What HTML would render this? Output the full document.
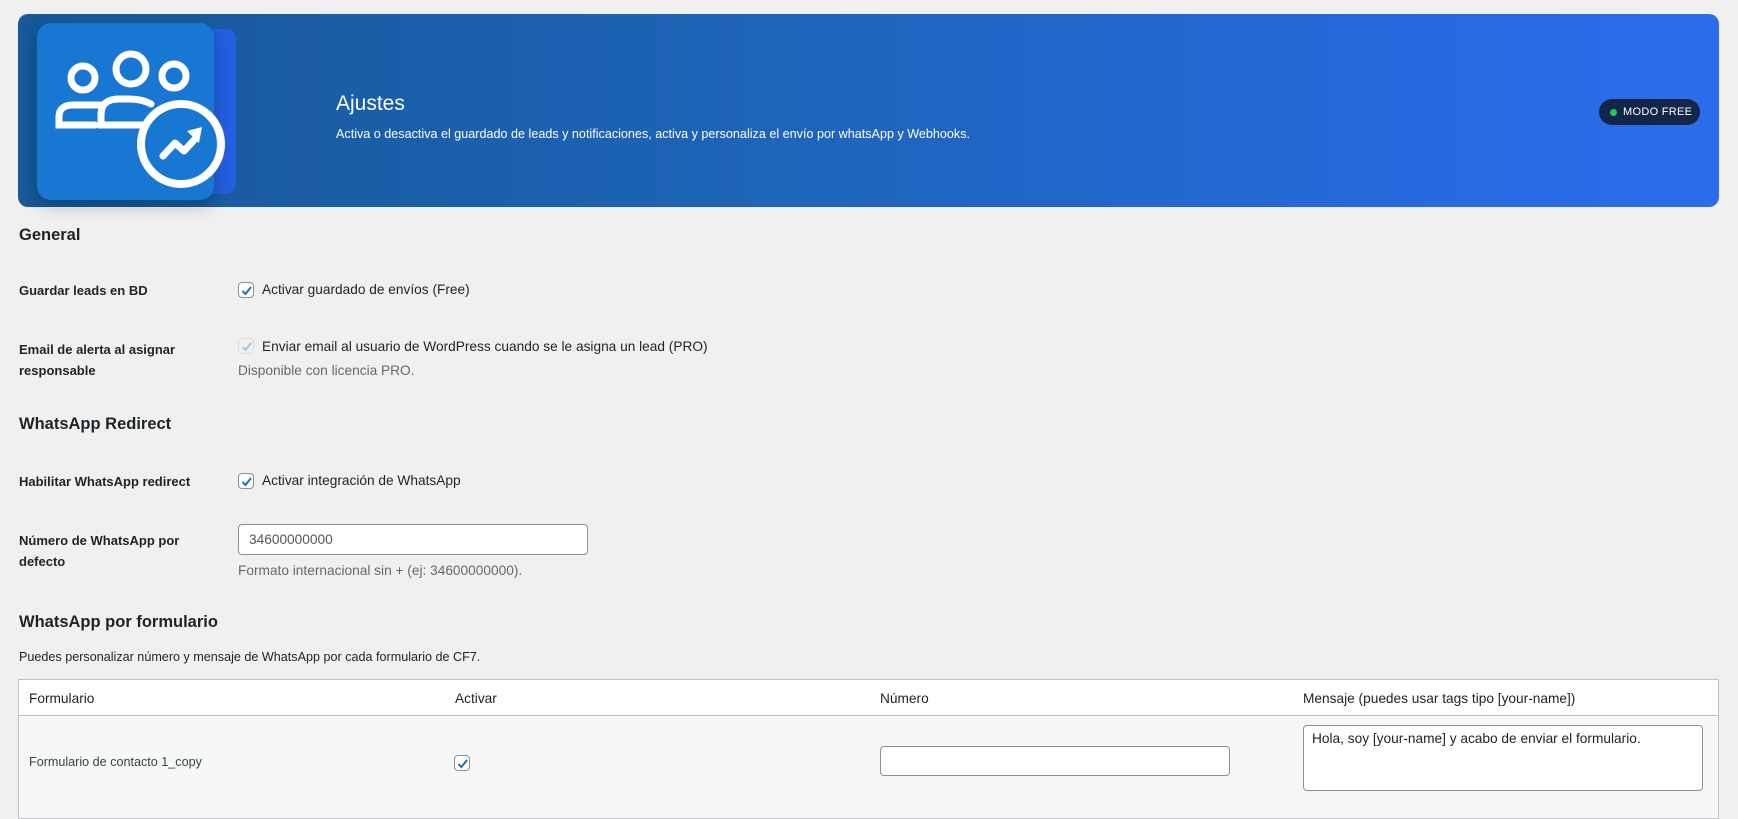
<!DOCTYPE html>
<html><head><meta charset="utf-8"><style>
*{box-sizing:border-box}
body{margin:0;width:1738px;height:807px;overflow:hidden;background:#f0f0f1;font-family:"Liberation Sans",sans-serif;color:#1d2327;font-size:13.7px;position:relative}
.a{position:absolute;white-space:nowrap}
.banner{position:absolute;left:18px;top:14px;width:1701px;height:193px;border-radius:10px;background:linear-gradient(90deg,#17599a 0%,#1d63b5 40%,#2b6ced 100%)}
.lbl{font-weight:bold;font-size:13px;line-height:21px}
h2{margin:0;font-size:16.5px;font-weight:bold}
.cb{position:absolute;width:16px;height:16px;border:1px solid #8c8f94;border-radius:4px;background:#fff}
.cb svg{position:absolute;left:0;top:0}
.desc{color:#646970}
.inp{position:absolute;background:#fff;border:1px solid #8c8f94;border-radius:4px}
</style></head><body>
<div class="banner"></div>
<div class="a" style="left:190px;top:29px;width:46px;height:165px;background:#245fe0;border-radius:10px"></div>
<div class="a" style="left:37px;top:23px;width:177px;height:177px;background:#1877d3;border-radius:14px;box-shadow:0 6px 16px rgba(0,0,0,.25)"></div>
<svg class="a" style="left:37px;top:23px" width="200" height="180" viewBox="0 0 200 180">
<g fill="none" stroke="#fff" stroke-width="7" stroke-linecap="round">
<circle cx="46" cy="55" r="12"/><circle cx="94" cy="46" r="15"/><circle cx="137" cy="53" r="12"/>
<path d="M64 82 H36 Q22 82 22 94 V102 H58"/>
<path d="M114 81 Q105 76 92 76 H82 Q64 76 64 92 V102 H110"/>
</g>
<circle cx="144" cy="121" r="40" fill="#1877d3" stroke="#fff" stroke-width="8"/>
<path d="M126 133 L138 120 L147 128 L158 116" fill="none" stroke="#fff" stroke-width="7" stroke-linecap="round" stroke-linejoin="round"/>
<path d="M150 108 L165 104 L162 120 Z" fill="#fff"/>
</svg>
<div class="a" style="left:336px;top:92px;color:#fff;font-size:21px">Ajustes</div>
<div class="a" style="left:336px;top:127px;color:#fff;font-size:12.6px">Activa o desactiva el guardado de leads y notificaciones, activa y personaliza el envío por whatsApp y Webhooks.</div>
<div class="a" style="left:1599px;top:99px;width:101px;height:26px;border-radius:13px;background:#13264a;color:#fff;font-size:11px;letter-spacing:.3px;line-height:26px;padding-left:24px">MODO FREE<span style="position:absolute;left:11px;top:10px;width:7px;height:7px;border-radius:50%;background:#22c55e"></span></div>

<h2 class="a" style="left:19px;top:226px">General</h2>
<div class="a lbl" style="left:19px;top:280px">Guardar leads en BD</div>
<div class="cb" style="left:238px;top:282px"><svg width="16" height="16" viewBox="0 0 16 16"><path d="M3.5 8 L6.5 11 L12 4" fill="none" stroke="#2271b1" stroke-width="2"/></svg></div>
<div class="a" style="left:262px;top:282px">Activar guardado de envíos (Free)</div>
<div class="a lbl" style="left:19px;top:339px">Email de alerta al asignar<br>responsable</div>
<div class="cb" style="left:238px;top:338px;border-color:#dcdcde;background:#f0f0f1"><svg width="16" height="16" viewBox="0 0 16 16"><path d="M3.5 8 L6.5 11 L12 4" fill="none" stroke="#a7c5e3" stroke-width="2"/></svg></div>
<div class="a" style="left:262px;top:339px">Enviar email al usuario de WordPress cuando se le asigna un lead (PRO)</div>
<div class="a desc" style="left:238px;top:363px">Disponible con licencia PRO.</div>

<h2 class="a" style="left:19px;top:415px">WhatsApp Redirect</h2>
<div class="a lbl" style="left:19px;top:471px">Habilitar WhatsApp redirect</div>
<div class="cb" style="left:238px;top:473px"><svg width="16" height="16" viewBox="0 0 16 16"><path d="M3.5 8 L6.5 11 L12 4" fill="none" stroke="#2271b1" stroke-width="2"/></svg></div>
<div class="a" style="left:262px;top:473px">Activar integración de WhatsApp</div>
<div class="a lbl" style="left:19px;top:530px">Número de WhatsApp por<br>defecto</div>
<div class="inp" style="left:238px;top:524px;width:350px;height:31px;padding:7px 10px;color:#50575e">34600000000</div>
<div class="a desc" style="left:238px;top:563px">Formato internacional sin + (ej: 34600000000).</div>

<h2 class="a" style="left:19px;top:613px">WhatsApp por formulario</h2>
<div class="a" style="left:19px;top:650px;font-size:12.6px">Puedes personalizar número y mensaje de WhatsApp por cada formulario de CF7.</div>
<div class="a" style="left:18px;top:679px;width:1701px;height:140px;border:1px solid #c3c4c7;background:#f6f7f7">
<div style="height:36px;background:#fff;border-bottom:1px solid #c3c4c7;position:relative">
<span class="a" style="left:10px;top:11px">Formulario</span><span class="a" style="left:436px;top:11px">Activar</span><span class="a" style="left:861px;top:11px">Número</span><span class="a" style="left:1284px;top:11px">Mensaje (puedes usar tags tipo [your-name])</span></div>
</div>
<div class="a" style="left:29px;top:755px;font-size:12.6px;color:#3c434a">Formulario de contacto 1_copy</div>
<div class="cb" style="left:454px;top:755px"><svg width="16" height="16" viewBox="0 0 16 16"><path d="M3.5 8 L6.5 11 L12 4" fill="none" stroke="#2271b1" stroke-width="2"/></svg></div>
<div class="inp" style="left:880px;top:746px;width:350px;height:30px"></div>
<div class="inp" style="left:1303px;top:725px;width:400px;height:66px;padding:5px 8px">Hola, soy [your-name] y acabo de enviar el formulario.</div>
</body></html>
